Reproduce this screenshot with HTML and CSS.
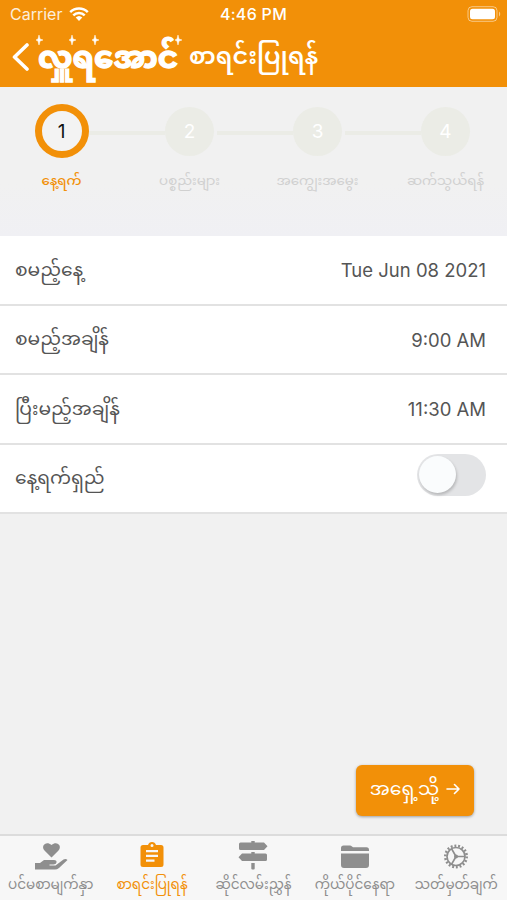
FILE: index.html
```html
<!DOCTYPE html>
<html lang="my">
<head>
    <meta charset="UTF-8">
    <meta name="viewport" content="width=device-width, initial-scale=1.0">
    <title>စာရင်းပြုရန်</title>
    <link rel="stylesheet" href="styles.css">
</head>
<body>
<header class="header">
    <div class="status-bar">
        <div class="carrier">
            <span>Carrier</span>
            <svg class="wifi" viewBox="0 0 20 14">
                <path d="M1.2 5.2a12.5 12.5 0 0 1 17.6 0M4.3 8.3a8 8 0 0 1 11.4 0" fill="none" stroke="#fff" stroke-width="2.5"/>
                <path d="M6.7 10.5a4.8 4.8 0 0 1 6.6 0L10 14z" fill="#fff"/>
            </svg>
        </div>
        <span class="clock">4:46 PM</span>
        <svg class="battery" viewBox="0 0 34 16">
            <rect x="1" y=".7" width="29" height="14.6" rx="4" fill="none" stroke="#fff" stroke-opacity=".5"/>
            <rect x="3" y="2.7" width="25" height="10.6" rx="2.5" fill="#fff"/>
            <path d="M32 5.5v5c1.6-.7 1.6-4.3 0-5z" fill="#fff" opacity=".5"/>
        </svg>
    </div>
    <div class="title-bar">
        <svg class="back" viewBox="0 0 17 28"><path d="M15 2 2.5 14 15 26" fill="none" stroke="#fff" stroke-width="3.6" stroke-linecap="round" stroke-linejoin="round"/></svg>
        <div class="brand">
            <span>လှူရအောင်</span>
            <svg class="sparkles" viewBox="0 0 146 12">
                <path id="spark" d="M3 1l1 4 3 1-3 1-1 4-1-4-2-1 2-1z" fill="#fff" stroke="#fff" stroke-width=".5"/>
                <use href="#spark" x="33"/>
                <use href="#spark" x="56"/>
                <use href="#spark" x="139"/>
            </svg>
        </div>
        <h1>စာရင်းပြုရန်</h1>
    </div>
</header>

<ol class="steps">
    <li class="step active"><span class="circle">1</span><span class="step-label">နေ့ရက်</span></li>
    <li class="step"><span class="circle">2</span><span class="step-label">ပစ္စည်းများ</span></li>
    <li class="step"><span class="circle">3</span><span class="step-label">အကျွေးအမွေး</span></li>
    <li class="step"><span class="circle">4</span><span class="step-label">ဆက်သွယ်ရန်</span></li>
</ol>

<main class="form">
    <div class="row"><span class="label">စမည့်နေ့</span><span class="value">Tue Jun 08 2021</span></div>
    <div class="row"><span class="label">စမည့်အချိန်</span><span class="value">9:00 AM</span></div>
    <div class="row"><span class="label">ပြီးမည့်အချိန်</span><span class="value">11:30 AM</span></div>
    <div class="row"><span class="label">နေ့ရက်ရှည်</span><span class="switch"></span></div>
</main>

<button class="next" type="button">
    <span>အရှေ့သို့</span>
    <svg viewBox="0 0 14 12"><path d="M1 6h12M8.5 1.5 13 6l-4.500 4.500" fill="none" stroke="#fff" stroke-width="1.600" stroke-linecap="round" stroke-linejoin="round"/></svg>
</button>

<nav class="tabs">
    <a class="tab">
        <svg viewBox="0 0 36 32">
            <path d="M18.500 17.500 11.500 10.500C7.500 6 13 .5 18.500 5 24 .5 29.500 6 25.500 10.500z"/>
            <path d="M2 23h5l4-3h10q3 0 2.500 2.500-.5 2-3 2h-4v1h6l8-6q2.500-1 4 .5L26 28q-2 1.500-4 1.500H2z"/>
        </svg>
        <span>ပင်မစာမျက်နှာ</span>
    </a>
    <a class="tab selected">
        <svg viewBox="0 0 36 32">
            <path fill-rule="evenodd" d="M9 5h5q1-3 4-3t4 3h5q2.500 0 2.500 2.500v17q0 2.500-2.500 2.500H9q-2.500 0-2.500-2.500v-17Q6.500 5 9 5zM18 4a1.500 1.500 0 1 0 0 3 1.500 1.500 0 0 0 0-3zM12 10v2.300h12V10zm0 4.700V17h12v-2.300zm0 4.700v2.300h8.500v-2.300z"/>
        </svg>
        <span>စာရင်းပြုရန်</span>
    </a>
    <a class="tab">
        <svg viewBox="0 0 36 32">
            <path d="M16.300 1h3.400v1.500H29l3.500 3.700L29 10H5.500Q4 10 4 8.500V4q0-1.500 1.500-1.500h10.800zM16.300 12h3.400v1.500h10.800Q32 13.500 32 15v4.500q0 1.500-1.500 1.500H7l-3.500-3.700L7 13.500h9.300zM16.300 23h3.400v5.500q0 1-1 1h-1.400q-1 0-1-1z"/>
        </svg>
        <span>ဆိုင်လမ်းညွှန်</span>
    </a>
    <a class="tab">
        <svg viewBox="0 0 36 32">
            <path d="M4 11V8q0-2.500 2.500-2.500H13q1 0 2 1l1 .8h13.500Q32 7.300 32 10v1zM4 13.500h28V25q0 3-3 3H7q-3 0-3-3z"/>
        </svg>
        <span>ကိုယ်ပိုင်နေရာ</span>
    </a>
    <a class="tab">
        <svg viewBox="0 0 36 32">
            <g fill="none" stroke="#8e8e8e">
                <circle cx="18" cy="16.500" r="10.700" stroke-width="2.600" stroke-dasharray="1.900 1.830"/>
                <circle cx="18" cy="16.500" r="9" stroke-width="1.700"/>
                <path d="M18 16.500h9M18 16.500 13.500 8.700M18 16.500l-4.500 7.800" stroke-width="1.700"/>
            </g>
            <circle cx="18" cy="16.500" r="2"/>
        </svg>
        <span>သတ်မှတ်ချက်</span>
    </a>
</nav>
</body>
</html>
```
FILE: styles.css
```css
* {
    box-sizing: border-box;
}

body {
    margin: 0;
    height: 900px;
    display: flex;
    flex-direction: column;
    overflow: hidden;
    background: #f1f1f1;
    color: #555;
    font-family: Inter, "Noto Sans Myanmar", "Noto Sans", sans-serif;
    font-size: 18px;
    white-space: nowrap;
}

.header {
    height: 87px;
    background: #f29008;
    color: #fff;
}

.status-bar {
    display: grid;
    grid-template-columns: 1fr auto 1fr;
    align-items: center;
    height: 28px;
    padding: 0 6px 0 10px;
    font-size: 16px;
}

.carrier {
    display: flex;
    align-items: center;
    gap: 7px;
}

.carrier span {
    opacity: 0.85;
}

.wifi {
    width: 20px;
    height: 14px;
}

.clock {
    margin-right: 4px;
    font-weight: 500;
    letter-spacing: 0.3px;
}

.battery {
    justify-self: end;
    width: 34px;
    height: 16px;
}

.title-bar {
    display: flex;
    align-items: center;
    height: 56px;
    padding-left: 12px;
}

.back {
    width: 17px;
    height: 28px;
    margin-top: 2px;
}

.brand {
    position: relative;
    width: 146px;
    margin: 0 5px 0 9px;
    font-size: 31px;
    font-weight: bold;
    line-height: 53px;
    -webkit-text-stroke: 1.3px #fff;
}

.sparkles {
    position: absolute;
    left: -2px;
    top: 4px;
    width: 146px;
    height: 12px;
}

h1 {
    margin: 0;
    font-size: 24px;
    font-weight: 600;
    line-height: 56px;
}

.steps {
    display: grid;
    grid-template-columns: repeat(4, 128px);
    justify-content: center;
    height: 149px;
    margin: 0;
    padding: 17px 0 0;
    list-style: none;
    background: linear-gradient(#f1f1f1 65%, #f0f0f4);
}

.step {
    position: relative;
    display: flex;
    flex-direction: column;
    align-items: center;
    color: #d0d0d0;
}

.step + .step::before {
    content: "";
    position: absolute;
    left: -37px;
    top: 27px;
    width: 76px;
    height: 4px;
    background: #ebece6;
}

.circle {
    width: 49px;
    height: 49px;
    margin: 3px 0 2px;
    border-radius: 50%;
    background: #ebece6;
    color: #fff;
    font-size: 19px;
    line-height: 49px;
    text-align: center;
}

.active .circle {
    width: 54px;
    height: 54px;
    margin: 0;
    border: 7px solid #f29008;
    background: #f3f3f3;
    color: #111;
    line-height: 42px;
}

.step-label {
    margin-top: 9px;
    font-size: 13.4px;
    line-height: 26px;
}

.active .step-label {
    color: #f29008;
    font-weight: 500;
}

.form {
    background: #fff;
}

.row {
    display: flex;
    align-items: center;
    justify-content: space-between;
    height: 69.5px;
    padding: 0 21px 0 15px;
    border-bottom: 2px solid #e2e2e2;
}

.label {
    padding-top: 3px;
    font-size: 18.7px;
}

.value {
    padding-top: 1px;
    font-size: 18.5px;
}

.switch {
    width: 69px;
    height: 42px;
    margin-top: -6px;
    border-radius: 21px;
    background: #e3e4e6;
}

.switch::before {
    content: "";
    display: block;
    width: 37px;
    height: 37px;
    margin: 2px;
    border-radius: 50%;
    background: #fafcfd;
    box-shadow: 1px 2px 3px rgba(0, 0, 0, 0.2);
}

.next {
    display: flex;
    align-items: center;
    justify-content: center;
    gap: 7px;
    width: 118px;
    height: 51px;
    margin: auto 33px 18px auto;
    padding: 0;
    border: 0;
    border-radius: 6px;
    background: #f29008;
    color: #fff;
    font: inherit;
    font-size: 18.8px;
    box-shadow: 0 1px 3px rgba(0, 0, 0, 0.35);
}

.next svg {
    width: 14px;
    height: 12px;
    margin-top: -4px;
}

.tabs {
    display: grid;
    grid-template-columns: repeat(5, 1fr);
    height: 66px;
    border-top: 2px solid #dcdcdc;
    background: #f7f7f7;
}

.tab {
    display: flex;
    flex-direction: column;
    align-items: center;
    padding-top: 4px;
    color: #8e8e8e;
    fill: #8e8e8e;
    font-size: 13.6px;
    line-height: 24px;
}

.tab svg {
    width: 36px;
    height: 32px;
}

.selected {
    color: #f29008;
    fill: #f29008;
}
```
